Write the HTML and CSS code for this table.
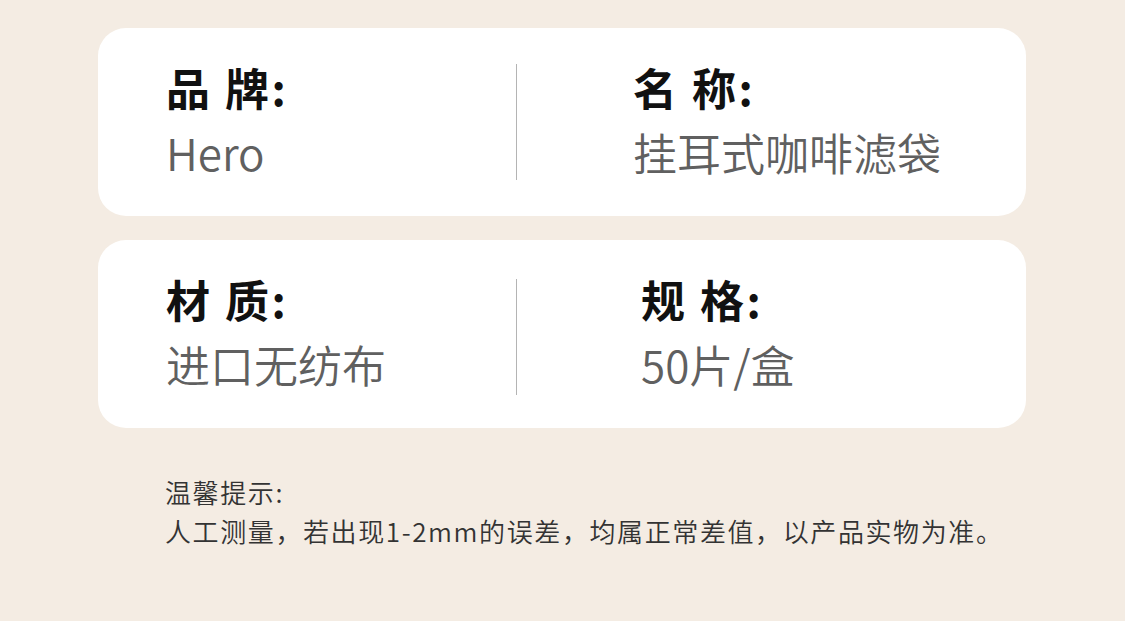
FILE: index.html
```html
<!DOCTYPE html>
<html lang="zh-CN">
<head>
<meta charset="utf-8">
<title>产品参数</title>
<link rel="stylesheet" href="styles.css">
</head>
<body>
<main class="page">
  <section class="card">
    <div class="cell cell-left">
      <div class="label">品 牌:</div>
      <div class="value">Hero</div>
    </div>
    <div class="divider"></div>
    <div class="cell cell-right">
      <div class="label">名 称:</div>
      <div class="value">挂耳式咖啡滤袋</div>
    </div>
  </section>
  <section class="card card-second">
    <div class="cell cell-left">
      <div class="label">材 质:</div>
      <div class="value">进口无纺布</div>
    </div>
    <div class="divider"></div>
    <div class="cell cell-right cell-right-wide">
      <div class="label">规 格:</div>
      <div class="value">50片/盒</div>
    </div>
  </section>
  <div class="note">
    <p class="note-title">温馨提示:</p>
    <p class="note-text">人工测量，若出现1-2mm的误差，均属正常差值，以产品实物为准。</p>
  </div>
</main>
</body>
</html>
```

FILE: styles.css
```css
html, body {
  margin: 0;
  padding: 0;
}
body {
  width: 1125px;
  height: 621px;
  overflow: hidden;
  background: #f4ece3;
  font-family: "Noto Sans CJK SC", "Noto Sans", sans-serif;
}
.page {
  padding: 28px 99px 0 98px;
  display: flex;
  flex-direction: column;
  gap: 24px;
}
.card {
  background: #ffffff;
  border-radius: 28px;
  height: 188px;
  display: flex;
  align-items: center;
}
.cell {
  display: flex;
  flex-direction: column;
}
.cell-left {
  width: 418px;
  box-sizing: border-box;
  padding-left: 68px;
}
.cell-right {
  padding-left: 116px;
}
.cell-right-wide {
  padding-left: 124px;
}
.divider {
  width: 1px;
  height: 116px;
  background: #b4b4b4;
}
.card-second .divider {
  margin-top: 6px;
}
.label {
  font-size: 44px;
  font-weight: 700;
  line-height: 60px;
  color: #111111;
  letter-spacing: 2.5px;
}
.value {
  font-size: 44px;
  font-weight: 350;
  line-height: 70px;
  color: #606060;
}
.note {
  margin-top: 20px;
  padding-left: 67px;
  color: #333333;
  font-size: 26px;
  font-weight: 350;
  line-height: 39px;
  letter-spacing: 1.6px;
}
.note p {
  margin: 0;
}
```
